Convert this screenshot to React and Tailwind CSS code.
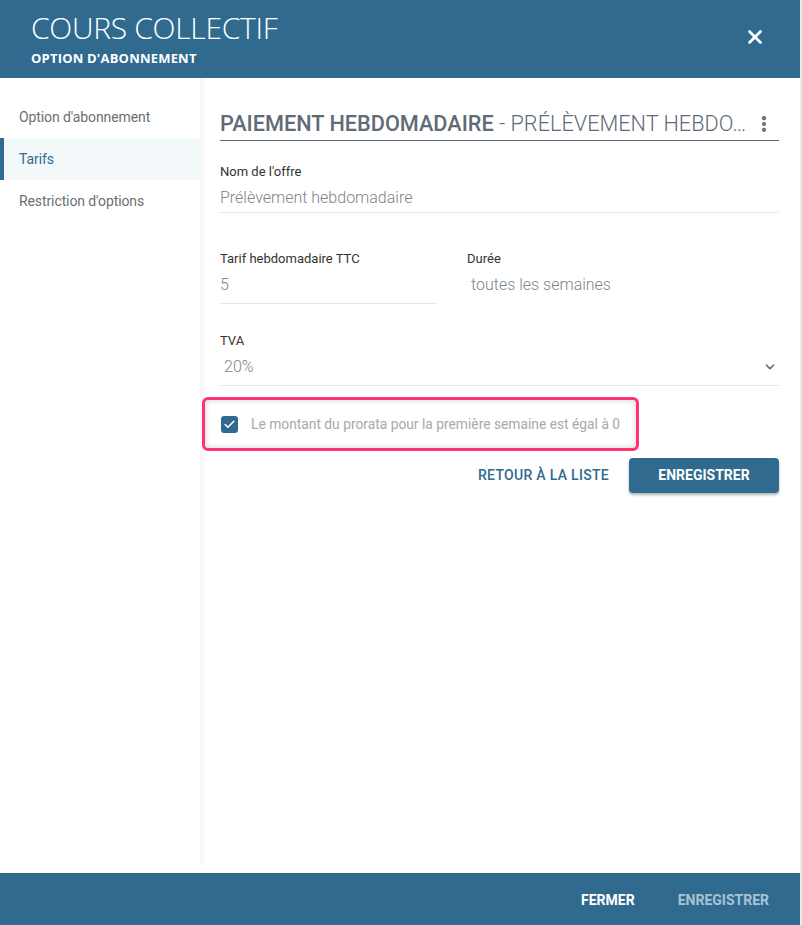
import { X, Check, ChevronDown, EllipsisVertical } from 'lucide-react';

const menuItems = [
  { label: "Option d'abonnement", active: false },
  { label: 'Tarifs', active: true },
  { label: "Restriction d'options", active: false },
];

const Field = ({ label, value, className = '', underline = true, valueClass = 'h-[28px]' }) => (
  <div className={className}>
    <div className="text-[13px] leading-[16px] text-[#333]">{label}</div>
    <div className={`mt-[9px] text-[16px] font-light leading-[18px] text-[#7d838a] ${underline ? 'border-b border-[#e6e6e6]' : ''} ${valueClass}`}>
      {value}
    </div>
  </div>
);

export default function App() {
  return (
    <div className="flex h-[925px] w-[802px] bg-white font-['Roboto',sans-serif]">
      <div className="flex w-[800px] flex-col">
        {/* Header */}
        <div className="flex h-[78px] shrink-0 items-start justify-between bg-[#306b8f] pl-[31px] pr-[34px] text-white">
          <div className="pt-[9px]">
            <h1 className="font-['Open_Sans',sans-serif] text-[30px] font-light leading-[38px] tracking-[-0.3px]">COURS COLLECTIF</h1>
            <div className="mt-[2px] font-['Open_Sans',sans-serif] text-[13px] font-bold leading-[18px] tracking-[0.2px]">OPTION D'ABONNEMENT</div>
          </div>
          <button className="mt-[26px]" aria-label="Fermer">
            <X className="h-[22px] w-[22px]" strokeWidth={3} />
          </button>
        </div>

        {/* Body */}
        <div className="flex flex-1 pb-[8px]">
          {/* Sidebar */}
          <div className="w-[200px] shrink-0 pt-[18px]">
            {menuItems.map((item) => (
              <div
                key={item.label}
                className={`flex h-[42px] items-center text-[14px] tracking-[-0.1px] ${
                  item.active
                    ? 'border-l-[4px] border-[#306b8f] bg-[#f3f9fb] pl-[15px] text-[#306b8f]'
                    : 'pl-[19px] text-[#6b6f73]'
                }`}
              >
                {item.label}
              </div>
            ))}
          </div>

          {/* Divider shadow */}
          <div className="w-[6px] shrink-0 bg-gradient-to-r from-[#f7f7f7] to-[#fcfcfc]" />

          {/* Content */}
          <div className="flex-1 pl-[14px] pr-[21px]">
            <div className="mt-[31px] flex h-[32px] items-center justify-between border-b border-[#5f6b78] pb-[1px]">
              <div className="truncate text-[21.7px] leading-[26px] text-[#5f6b78]">
                <span className="font-medium">PAIEMENT HEBDOMADAIRE</span>
                <span className="font-light"> - PRÉLÈVEMENT HEBDO…</span>
              </div>
              <EllipsisVertical className="mr-[5px] h-[20px] w-[20px] shrink-0 text-[#5f6b78]" strokeWidth={3} />
            </div>

            <Field className="mt-[23px]" label="Nom de l'offre" value="Prélèvement hebdomadaire" valueClass="h-[24px]" />

            <div className="mt-[38px] flex">
              <Field className="w-[217px]" label="Tarif hebdomadaire TTC" value="5" />
              <Field className="ml-[30px] flex-1" label="Durée" value="toutes les semaines" underline={false} valueClass="h-[28px] pl-[4px]" />
            </div>

            <div className="mt-[29px]">
              <div className="text-[13px] leading-[16px] text-[#333]">TVA</div>
              <div className="mt-[9px] flex h-[28px] items-start justify-between border-b border-[#e6e6e6] pl-[4px] text-[16px] font-light leading-[18px] text-[#7d838a]">
                <span>20%</span>
                <ChevronDown className="mr-[2px] mt-[2px] h-[14px] w-[14px] text-[#5f6b78]" strokeWidth={3} />
              </div>
            </div>

            <div className="ml-[-18px] mt-[11px] flex h-[54px] w-[437px] items-center rounded-[6px] border-[3px] border-[#ff3370] pl-[16px] shadow-[inset_0_0_6px_rgba(0,0,0,0.18)]">
              <span className="flex h-[17px] w-[17px] items-center justify-center rounded-[3px] bg-[#306b8f]">
                <Check className="h-[13px] w-[13px] text-white" strokeWidth={3} />
              </span>
              <span className="ml-[13px] text-[13.8px] text-[#a6a9ad]">Le montant du prorata pour la première semaine est égal à 0</span>
            </div>

            <div className="mt-[7px] flex items-center justify-end">
              <button className="mr-[20px] text-[14px] font-medium tracking-[0.3px] text-[#306b8f]">RETOUR À LA LISTE</button>
              <button className="h-[35px] w-[150px] rounded-[4px] bg-[#306b8f] text-[14px] font-bold text-white shadow-[0_2px_3px_rgba(0,0,0,0.3)]">
                ENREGISTRER
              </button>
            </div>
          </div>
        </div>

        {/* Footer */}
        <div className="flex h-[52px] shrink-0 items-center justify-end gap-[43px] bg-[#306b8f] pr-[31px] pt-[2px] text-[14px] font-bold">
          <button className="text-white">FERMER</button>
          <button className="text-[#a9c2d3]">ENREGISTRER</button>
        </div>
      </div>
      <div className="w-[2px] bg-[#ececec]" />
    </div>
  );
}
